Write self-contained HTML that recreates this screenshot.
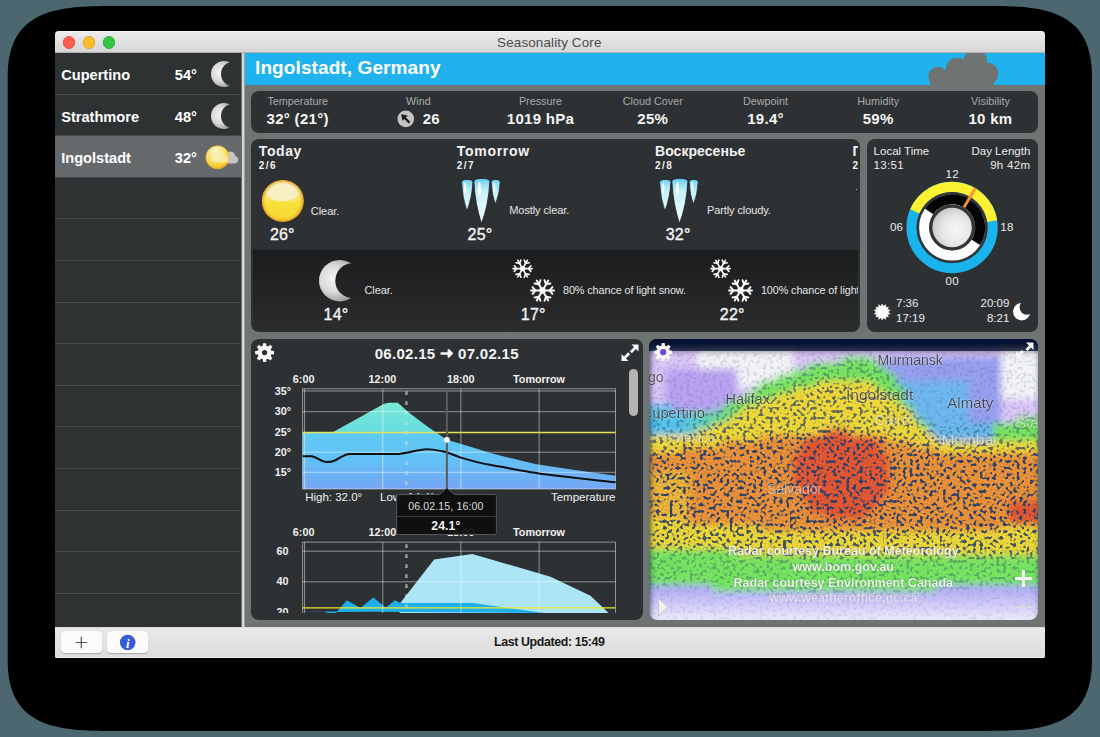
<!DOCTYPE html>
<html><head><meta charset="utf-8">
<style>
*{margin:0;padding:0;box-sizing:border-box}
html,body{width:1100px;height:737px;overflow:hidden;background:#4c676f;font-family:"Liberation Sans",sans-serif;position:relative}
.a{position:absolute}
.t{position:absolute;white-space:nowrap;line-height:1}
svg{position:absolute;overflow:visible}
</style></head><body>
<svg style="left:0;top:0" width="1100" height="737" viewBox="0 0 1100 737"><path d="M7.7 75.9 C7.7 5.9 63.7 5.9 117.7 5.9 L981.9000000000001 5.9 C1035.9 5.9 1091.9 5.9 1091.9 75.9 L1091.9 660.9 C1091.9 730.9 1035.9 730.9 981.9000000000001 730.9 L117.7 730.9 C63.7 730.9 7.7 730.9 7.7 660.9 Z" fill="#000"/></svg>
<div class="a" style="left:55px;top:31px;width:990px;height:627px;background:#6d7472;border-radius:4px 4px 1px 1px;overflow:hidden"></div>
<div class="a" style="left:55px;top:31px;width:990px;height:22px;background:linear-gradient(#fbfbfb 0,#ebebeb 1px,#d5d5d5 100%);border-radius:4px 4px 0 0;border-bottom:1px solid #b3b3b3"></div>
<div class="a" style="left:62.89999999999999px;top:36.199999999999996px;width:12.4px;height:12.4px;border-radius:50%;background:#fd5e4a;border:0.5px solid #e5503c"></div>
<div class="a" style="left:83.0px;top:36.199999999999996px;width:12.4px;height:12.4px;border-radius:50%;background:#fdbc2e;border:0.5px solid #dea123"></div>
<div class="a" style="left:102.89999999999999px;top:36.199999999999996px;width:12.4px;height:12.4px;border-radius:50%;background:#37c545;border:0.5px solid #2aae38"></div>
<div class="t" style="left:549.3px;top:35.96px;font-size:13.4px;font-weight:normal;color:#4b4b4b;transform:translateX(-50%);letter-spacing:0.15px;">Seasonality Core</div>
<div class="a" style="left:55px;top:53px;width:186px;height:574px;background:#2e3233"></div>
<div class="a" style="left:55px;top:93.6px;width:186px;height:1px;background:#46494b"></div>
<div class="a" style="left:55px;top:135.2px;width:186px;height:1px;background:#46494b"></div>
<div class="a" style="left:55px;top:136.2px;width:186px;height:41.599999999999994px;background:#65696b"></div>
<div class="a" style="left:55px;top:176.8px;width:186px;height:1px;background:#46494b"></div>
<div class="a" style="left:55px;top:218.4px;width:186px;height:1px;background:#46494b"></div>
<div class="a" style="left:55px;top:260.0px;width:186px;height:1px;background:#46494b"></div>
<div class="a" style="left:55px;top:301.6px;width:186px;height:1px;background:#46494b"></div>
<div class="a" style="left:55px;top:343.2px;width:186px;height:1px;background:#46494b"></div>
<div class="a" style="left:55px;top:384.8px;width:186px;height:1px;background:#46494b"></div>
<div class="a" style="left:55px;top:426.4px;width:186px;height:1px;background:#46494b"></div>
<div class="a" style="left:55px;top:468.0px;width:186px;height:1px;background:#46494b"></div>
<div class="a" style="left:55px;top:509.6px;width:186px;height:1px;background:#46494b"></div>
<div class="a" style="left:55px;top:551.2px;width:186px;height:1px;background:#46494b"></div>
<div class="a" style="left:55px;top:592.8px;width:186px;height:1px;background:#46494b"></div>
<div class="a" style="left:55px;top:634.4px;width:186px;height:1px;background:#46494b"></div>
<div class="t" style="left:61.2px;top:67.94px;font-size:14.6px;font-weight:bold;color:#fff;">Cupertino</div>
<div class="t" style="left:174.8px;top:67.94px;font-size:14.6px;font-weight:bold;color:#fff;">54°</div>
<div class="t" style="left:61.2px;top:109.54px;font-size:14.6px;font-weight:bold;color:#fff;">Strathmore</div>
<div class="t" style="left:174.8px;top:109.54px;font-size:14.6px;font-weight:bold;color:#fff;">48°</div>
<div class="t" style="left:61.2px;top:151.14px;font-size:14.6px;font-weight:bold;color:#fff;">Ingolstadt</div>
<div class="t" style="left:174.8px;top:151.14px;font-size:14.6px;font-weight:bold;color:#fff;">32°</div>
<svg style="left:209.4px;top:59.400000000000006px" width="30" height="30" viewBox="209.4 59.400000000000006 30 30">
<defs><radialGradient id="m1g" cx="220.5" cy="73.10000000000001" r="15.6" gradientUnits="userSpaceOnUse"><stop offset="0" stop-color="#f4f4f4"/><stop offset="0.55" stop-color="#d9d9d9"/><stop offset="1" stop-color="#9c9c9c"/></radialGradient>
<mask id="m1m"><rect x="209.4" y="59.400000000000006" width="30" height="30" fill="#fff"/><circle cx="233.6" cy="74.4" r="12.2" fill="#000"/></mask></defs>
<circle cx="224.4" cy="74.4" r="13" fill="url(#m1g)" mask="url(#m1m)"/></svg>
<svg style="left:209.4px;top:101.0px" width="30" height="30" viewBox="209.4 101.0 30 30">
<defs><radialGradient id="m2g" cx="220.5" cy="114.7" r="15.6" gradientUnits="userSpaceOnUse"><stop offset="0" stop-color="#f4f4f4"/><stop offset="0.55" stop-color="#d9d9d9"/><stop offset="1" stop-color="#9c9c9c"/></radialGradient>
<mask id="m2m"><rect x="209.4" y="101.0" width="30" height="30" fill="#fff"/><circle cx="233.6" cy="116.0" r="12.2" fill="#000"/></mask></defs>
<circle cx="224.4" cy="116.0" r="13" fill="url(#m2g)" mask="url(#m2m)"/></svg>
<svg style="left:200px;top:140px" width="45" height="35" viewBox="200 140 45 35">
<defs><radialGradient id="sg1" cx="215.5" cy="151" r="17" gradientUnits="userSpaceOnUse"><stop offset="0" stop-color="#fbf5d0"/><stop offset="0.45" stop-color="#f8e67a"/><stop offset="0.85" stop-color="#f5d23a"/><stop offset="1" stop-color="#f0b830"/></radialGradient></defs>
<path d="M225 163.4 h9.8 a3.6 3.6 0 0 0 0.6 -7.1 a5.2 5.2 0 0 0 -9.6 -2.2 a4 4 0 0 0 -0.8 9.3z" fill="#c6c6c6"/>
<circle cx="217.5" cy="157.3" r="11.6" fill="url(#sg1)" stroke="#eeac2c" stroke-width="0.7"/>
<path d="M214.5 162.6 h10.5 a3.3 3.3 0 0 0 0.3 -6.6 a4.8 4.8 0 0 0 -8.8 -1.6 a3.8 3.8 0 0 0 -2 8.2z" fill="#f8f0b8" opacity="0.75"/>
</svg>
<div class="a" style="left:241px;top:53px;width:4.300000000000011px;height:574px;background:#d8d8d8;border-left:1px solid #6a6d6e;border-right:0.6px solid #a0a0a0"></div>
<div class="a" style="left:245.2px;top:53px;width:799.8px;height:32px;background:#1fb2ec"></div>
<div class="t" style="left:255.0px;top:58.22px;font-size:19px;font-weight:bold;color:#fff;letter-spacing:0.1px;">Ingolstadt, Germany</div>
<svg style="left:920px;top:53px;overflow:hidden" width="125" height="32" viewBox="920 53 125 32">
<g fill="#6d7472"><circle cx="938" cy="76.6" r="9.8"/><circle cx="957" cy="68.9" r="11.2"/><circle cx="975.3" cy="60.6" r="11.6"/><circle cx="987.1" cy="73.6" r="11.2"/><rect x="936" y="70" width="52" height="15"/><rect x="930" y="78" width="10" height="7"/><rect x="985" y="78" width="9" height="7"/></g>
</svg>
<div class="a" style="left:251px;top:91px;width:787px;height:41.5px;background:#2e3133;border-radius:8px"></div>
<div class="a" style="left:251px;top:138.5px;width:609px;height:193.8px;background:#2e3133;border-radius:8px"></div>
<div class="a" style="left:866.5px;top:138.5px;width:171.5px;height:193.8px;background:#2e3133;border-radius:8px"></div>
<div class="a" style="left:251px;top:338.7px;width:392.20000000000005px;height:281.09999999999997px;background:#2e3133;border-radius:8px"></div>
<div class="t" style="left:297.7px;top:95.86px;font-size:10.8px;font-weight:normal;color:#a9abac;transform:translateX(-50%);">Temperature</div>
<div class="t" style="left:297.7px;top:111.30px;font-size:15px;font-weight:bold;color:#f4f4f4;transform:translateX(-50%);letter-spacing:0.3px;">32° (21°)</div>
<div class="t" style="left:418.4px;top:95.86px;font-size:10.8px;font-weight:normal;color:#a9abac;transform:translateX(-50%);">Wind</div>
<div class="t" style="left:540.5px;top:95.86px;font-size:10.8px;font-weight:normal;color:#a9abac;transform:translateX(-50%);">Pressure</div>
<div class="t" style="left:540.5px;top:111.30px;font-size:15px;font-weight:bold;color:#f4f4f4;transform:translateX(-50%);letter-spacing:0.3px;">1019 hPa</div>
<div class="t" style="left:652.8px;top:95.86px;font-size:10.8px;font-weight:normal;color:#a9abac;transform:translateX(-50%);">Cloud Cover</div>
<div class="t" style="left:652.8px;top:111.30px;font-size:15px;font-weight:bold;color:#f4f4f4;transform:translateX(-50%);letter-spacing:0.3px;">25%</div>
<div class="t" style="left:765.5px;top:95.86px;font-size:10.8px;font-weight:normal;color:#a9abac;transform:translateX(-50%);">Dewpoint</div>
<div class="t" style="left:765.5px;top:111.30px;font-size:15px;font-weight:bold;color:#f4f4f4;transform:translateX(-50%);letter-spacing:0.3px;">19.4°</div>
<div class="t" style="left:878.2px;top:95.86px;font-size:10.8px;font-weight:normal;color:#a9abac;transform:translateX(-50%);">Humidity</div>
<div class="t" style="left:878.2px;top:111.30px;font-size:15px;font-weight:bold;color:#f4f4f4;transform:translateX(-50%);letter-spacing:0.3px;">59%</div>
<div class="t" style="left:990.5px;top:95.86px;font-size:10.8px;font-weight:normal;color:#a9abac;transform:translateX(-50%);">Visibility</div>
<div class="t" style="left:990.5px;top:111.30px;font-size:15px;font-weight:bold;color:#f4f4f4;transform:translateX(-50%);letter-spacing:0.3px;">10 km</div>
<div class="t" style="left:431.3px;top:111.30px;font-size:15px;font-weight:bold;color:#f4f4f4;transform:translateX(-50%);letter-spacing:0.3px;">26</div>
<svg style="left:396px;top:110px" width="20" height="20" viewBox="396 110 20 20">
<circle cx="405.8" cy="118.9" r="8.3" fill="#c4c4c4"/>
<path d="M401.2 114.3 L407.8 115.6 L405.9 117.4 L410.3 121.8 L408.7 123.4 L404.3 119 L402.5 120.9 Z" fill="#1c1c1c"/>
</svg>
<div class="a" style="left:55px;top:627px;width:990px;height:31px;background:linear-gradient(#e9e9e9,#dcdcdc);border-top:1px solid #d9d9d9;border-bottom:1px solid #f2f2f2;border-radius:0 0 2px 2px"></div>
<div class="a" style="left:60.5px;top:631.3px;width:41.2px;height:21.800000000000068px;background:#fbfbfb;border-radius:4px;box-shadow:0 0.5px 1px rgba(0,0,0,0.25)"></div>
<div class="a" style="left:107.3px;top:631.3px;width:41.2px;height:21.800000000000068px;background:#fbfbfb;border-radius:4px;box-shadow:0 0.5px 1px rgba(0,0,0,0.25)"></div>
<svg style="left:60px;top:631px" width="90" height="23" viewBox="60 631 90 23">
<path d="M81.3 636.7 V648.3 M75.5 642.5 H87.1" stroke="#555" stroke-width="1.2"/>
<circle cx="127.7" cy="642.5" r="7.8" fill="#3a5bd6"/>
</svg>
<div class="t" style="left:127.7px;top:636.50px;font-size:13px;font-weight:bold;color:#fff;transform:translateX(-50%);font-family:Liberation Serif;font-style:italic">i</div>
<div class="t" style="left:549.3px;top:635.90px;font-size:12.4px;font-weight:bold;color:#1a1a1a;transform:translateX(-50%);letter-spacing:-0.38px;">Last Updated: 15:49</div>
<div class="a" style="left:253.4px;top:250.2px;width:604.4px;height:81.0px;background:linear-gradient(#1b1c1d,#2a2c2e);border-radius:0 0 8px 6px"></div>
<div class="t" style="left:258.8px;top:144.35px;font-size:14px;font-weight:bold;color:#f2f2f2;letter-spacing:0.6px;">Today</div>
<div class="t" style="left:258.8px;top:161.34px;font-size:10px;font-weight:bold;color:#f0f0f0;letter-spacing:1.4px;">2/6</div>
<div class="t" style="left:456.8px;top:144.35px;font-size:14px;font-weight:bold;color:#f2f2f2;letter-spacing:0.7px;">Tomorrow</div>
<div class="t" style="left:456.8px;top:161.34px;font-size:10px;font-weight:bold;color:#f0f0f0;letter-spacing:1.4px;">2/7</div>
<div class="t" style="left:655px;top:144.35px;font-size:14px;font-weight:bold;color:#f2f2f2;letter-spacing:0.05px;">Воскресенье</div>
<div class="t" style="left:655px;top:161.34px;font-size:10px;font-weight:bold;color:#f0f0f0;letter-spacing:1.4px;">2/8</div>
<div class="a" style="left:852.5px;top:146px;width:5.3px;height:28px;overflow:hidden">
<div class="t" style="left:0.1px;top:-1.65px;font-size:14px;font-weight:bold;color:#f2f2f2;">П</div>
</div>
<div class="t" style="left:852.6px;top:161.34px;font-size:10px;font-weight:bold;color:#f0f0f0;">2</div>
<div class="a" style="left:855.8px;top:188.5px;width:1.7000000000000455px;height:1.6999999999999886px;background:#6ccdf0"></div>
<svg style="left:258px;top:176px" width="50" height="50" viewBox="258 176 50 50">
<defs><linearGradient id="sunb" x1="0" y1="180" x2="0" y2="222" gradientUnits="userSpaceOnUse"><stop offset="0" stop-color="#f6e890"/><stop offset="0.45" stop-color="#f7e56a"/><stop offset="0.55" stop-color="#f8e03a"/><stop offset="1" stop-color="#f6d82e"/></linearGradient>
<radialGradient id="sune" cx="282.7" cy="201" r="21" gradientUnits="userSpaceOnUse"><stop offset="0.8" stop-color="#f0a020" stop-opacity="0"/><stop offset="1" stop-color="#e89a20" stop-opacity="0.75"/></radialGradient></defs>
<circle cx="282.8" cy="200.9" r="20.4" fill="url(#sunb)"/>
<ellipse cx="282.7" cy="191.5" rx="16.3" ry="9.8" fill="#f8f2d2" opacity="0.85"/>
<circle cx="282.8" cy="200.9" r="20.4" fill="url(#sune)" stroke="#eeae2c" stroke-width="1.1"/>
</svg>
<div class="t" style="left:310.8px;top:205.89px;font-size:11px;font-weight:normal;color:#e6e6e6;letter-spacing:-0.05px;">Clear.</div>
<div class="t" style="left:282.3px;top:227.06px;font-size:16px;font-weight:normal;color:#f4f4f4;transform:translateX(-50%);letter-spacing:0.2px;-webkit-text-stroke:0.35px #f4f4f4">26°</div>
<svg style="left:455px;top:172px" width="55" height="55" viewBox="455 172 55 55">
<defs><linearGradient id="ic0" x1="0" y1="178" x2="0" y2="223" gradientUnits="userSpaceOnUse"><stop offset="0" stop-color="#52c4ec"/><stop offset="0.1" stop-color="#8ad9f4"/><stop offset="0.3" stop-color="#c6f0fa"/><stop offset="1" stop-color="#f2fdff"/></linearGradient></defs>
<g transform="translate(0,0)" fill="url(#ic0)" stroke="#16191a" stroke-width="0.7">
<path d="M461.6 182.3 Q461.6 179.4 467.3 179.4 Q472.9 179.4 472.9 182.3 Q472 198 466.9 211 Q462.4 198 461.6 182.3 Z"/>
<path d="M473.9 181.6 Q473.9 178.4 481.8 178.4 Q489.8 178.4 489.8 181.6 Q488.6 205 481.5 223.4 Q475.2 205 473.9 181.6 Z"/>
<path d="M491.2 182.3 Q491.2 179.4 495.7 179.4 Q500.2 179.4 500.2 182.3 Q499.5 195 495.3 204.4 Q491.9 195 491.2 182.3 Z"/>
</g>
<g transform="translate(0,0)" fill="#ffffff" opacity="0.85">
<ellipse cx="465.2" cy="188" rx="1.2" ry="6"/>
<ellipse cx="479.4" cy="189" rx="1.5" ry="7.5"/>
<ellipse cx="494.3" cy="187" rx="1" ry="5"/>
</g></svg>
<div class="t" style="left:509.3px;top:205.39px;font-size:11px;font-weight:normal;color:#e6e6e6;letter-spacing:-0.1px;">Mostly clear.</div>
<div class="t" style="left:480.0px;top:227.06px;font-size:16px;font-weight:normal;color:#f4f4f4;transform:translateX(-50%);letter-spacing:0.2px;-webkit-text-stroke:0.35px #f4f4f4">25°</div>
<svg style="left:653.2px;top:172px" width="55" height="55" viewBox="653.2 172 55 55">
<defs><linearGradient id="ic198" x1="0" y1="178" x2="0" y2="223" gradientUnits="userSpaceOnUse"><stop offset="0" stop-color="#52c4ec"/><stop offset="0.1" stop-color="#8ad9f4"/><stop offset="0.3" stop-color="#c6f0fa"/><stop offset="1" stop-color="#f2fdff"/></linearGradient></defs>
<g transform="translate(198.2,0)" fill="url(#ic198)" stroke="#16191a" stroke-width="0.7">
<path d="M461.6 182.3 Q461.6 179.4 467.3 179.4 Q472.9 179.4 472.9 182.3 Q472 198 466.9 211 Q462.4 198 461.6 182.3 Z"/>
<path d="M473.9 181.6 Q473.9 178.4 481.8 178.4 Q489.8 178.4 489.8 181.6 Q488.6 205 481.5 223.4 Q475.2 205 473.9 181.6 Z"/>
<path d="M491.2 182.3 Q491.2 179.4 495.7 179.4 Q500.2 179.4 500.2 182.3 Q499.5 195 495.3 204.4 Q491.9 195 491.2 182.3 Z"/>
</g>
<g transform="translate(198.2,0)" fill="#ffffff" opacity="0.85">
<ellipse cx="465.2" cy="188" rx="1.2" ry="6"/>
<ellipse cx="479.4" cy="189" rx="1.5" ry="7.5"/>
<ellipse cx="494.3" cy="187" rx="1" ry="5"/>
</g></svg>
<div class="t" style="left:707px;top:205.39px;font-size:11px;font-weight:normal;color:#e6e6e6;letter-spacing:-0.1px;">Partly cloudy.</div>
<div class="t" style="left:678.1px;top:227.06px;font-size:16px;font-weight:normal;color:#f4f4f4;transform:translateX(-50%);letter-spacing:0.2px;-webkit-text-stroke:0.35px #f4f4f4">32°</div>
<svg style="left:317.2px;top:257.6px" width="45.4" height="45.4" viewBox="317.2 257.6 45.4 45.4">
<defs><radialGradient id="m3g" cx="333.69" cy="278.23" r="24.84" gradientUnits="userSpaceOnUse"><stop offset="0" stop-color="#f4f4f4"/><stop offset="0.55" stop-color="#d9d9d9"/><stop offset="1" stop-color="#9c9c9c"/></radialGradient>
<mask id="m3m"><rect x="317.2" y="257.6" width="45.4" height="45.4" fill="#fff"/><circle cx="353" cy="280.3" r="17.5" fill="#000"/></mask></defs>
<circle cx="339.9" cy="280.3" r="20.7" fill="url(#m3g)" mask="url(#m3m)"/></svg>
<div class="t" style="left:364.5px;top:284.89px;font-size:11px;font-weight:normal;color:#e6e6e6;letter-spacing:-0.1px;">Clear.</div>
<div class="t" style="left:336px;top:306.66px;font-size:16px;font-weight:normal;color:#f4f4f4;transform:translateX(-50%);letter-spacing:0.2px;-webkit-text-stroke:0.35px #f4f4f4">14°</div>
<svg style="left:511.19999999999993px;top:257.0px" width="23.2" height="23.2" viewBox="511.19999999999993 257.0 23.2 23.2"><g stroke="#fafafa" stroke-width="1.63" stroke-linecap="round" fill="none"><path d="M522.8 268.6 L532.40 268.60"/><path d="M528.75 268.60 l2.34 2.79"/><path d="M528.75 268.60 l2.34 -2.79"/><path d="M522.8 268.6 L527.60 276.91"/><path d="M525.78 273.75 l-1.25 3.43"/><path d="M525.78 273.75 l3.59 0.63"/><path d="M522.8 268.6 L518.00 276.91"/><path d="M519.82 273.75 l-3.59 0.63"/><path d="M519.82 273.75 l1.25 3.43"/><path d="M522.8 268.6 L513.20 268.60"/><path d="M516.85 268.60 l-2.34 -2.79"/><path d="M516.85 268.60 l-2.34 2.79"/><path d="M522.8 268.6 L518.00 260.29"/><path d="M519.82 263.45 l1.25 -3.43"/><path d="M519.82 263.45 l-3.59 -0.63"/><path d="M522.8 268.6 L527.60 260.29"/><path d="M525.78 263.45 l3.59 -0.63"/><path d="M525.78 263.45 l-1.25 -3.43"/><circle cx="522.8" cy="268.6" r="2.69" fill="#fafafa" stroke="none"/></g></svg>
<svg style="left:529.2px;top:276.5px" width="27.0" height="27.0" viewBox="529.2 276.5 27.0 27.0"><g stroke="#fafafa" stroke-width="1.96" stroke-linecap="round" fill="none"><path d="M542.7 290 L554.20 290.00"/><path d="M549.83 290.00 l2.81 3.35"/><path d="M549.83 290.00 l2.81 -3.35"/><path d="M542.7 290 L548.45 299.96"/><path d="M546.27 296.17 l-1.49 4.11"/><path d="M546.27 296.17 l4.30 0.76"/><path d="M542.7 290 L536.95 299.96"/><path d="M539.13 296.17 l-4.30 0.76"/><path d="M539.13 296.17 l1.49 4.11"/><path d="M542.7 290 L531.20 290.00"/><path d="M535.57 290.00 l-2.81 -3.35"/><path d="M535.57 290.00 l-2.81 3.35"/><path d="M542.7 290 L536.95 280.04"/><path d="M539.13 283.83 l1.49 -4.11"/><path d="M539.13 283.83 l-4.30 -0.76"/><path d="M542.7 290 L548.45 280.04"/><path d="M546.27 283.83 l4.30 -0.76"/><path d="M546.27 283.83 l-1.49 -4.11"/><circle cx="542.7" cy="290" r="3.22" fill="#fafafa" stroke="none"/></g></svg>
<div class="t" style="left:563px;top:285.36px;font-size:10.8px;font-weight:normal;color:#e6e6e6;letter-spacing:-0.08px;">80% chance of light snow.</div>
<div class="t" style="left:533.2px;top:306.66px;font-size:16px;font-weight:normal;color:#f4f4f4;transform:translateX(-50%);letter-spacing:0.2px;-webkit-text-stroke:0.35px #f4f4f4">17°</div>
<svg style="left:709.1999999999999px;top:257.0px" width="23.2" height="23.2" viewBox="709.1999999999999 257.0 23.2 23.2"><g stroke="#fafafa" stroke-width="1.63" stroke-linecap="round" fill="none"><path d="M720.8 268.6 L730.40 268.60"/><path d="M726.75 268.60 l2.34 2.79"/><path d="M726.75 268.60 l2.34 -2.79"/><path d="M720.8 268.6 L725.60 276.91"/><path d="M723.78 273.75 l-1.25 3.43"/><path d="M723.78 273.75 l3.59 0.63"/><path d="M720.8 268.6 L716.00 276.91"/><path d="M717.82 273.75 l-3.59 0.63"/><path d="M717.82 273.75 l1.25 3.43"/><path d="M720.8 268.6 L711.20 268.60"/><path d="M714.85 268.60 l-2.34 -2.79"/><path d="M714.85 268.60 l-2.34 2.79"/><path d="M720.8 268.6 L716.00 260.29"/><path d="M717.82 263.45 l1.25 -3.43"/><path d="M717.82 263.45 l-3.59 -0.63"/><path d="M720.8 268.6 L725.60 260.29"/><path d="M723.78 263.45 l3.59 -0.63"/><path d="M723.78 263.45 l-1.25 -3.43"/><circle cx="720.8" cy="268.6" r="2.69" fill="#fafafa" stroke="none"/></g></svg>
<svg style="left:727.2px;top:276.5px" width="27.0" height="27.0" viewBox="727.2 276.5 27.0 27.0"><g stroke="#fafafa" stroke-width="1.96" stroke-linecap="round" fill="none"><path d="M740.7 290 L752.20 290.00"/><path d="M747.83 290.00 l2.81 3.35"/><path d="M747.83 290.00 l2.81 -3.35"/><path d="M740.7 290 L746.45 299.96"/><path d="M744.27 296.17 l-1.49 4.11"/><path d="M744.27 296.17 l4.30 0.76"/><path d="M740.7 290 L734.95 299.96"/><path d="M737.13 296.17 l-4.30 0.76"/><path d="M737.13 296.17 l1.49 4.11"/><path d="M740.7 290 L729.20 290.00"/><path d="M733.57 290.00 l-2.81 -3.35"/><path d="M733.57 290.00 l-2.81 3.35"/><path d="M740.7 290 L734.95 280.04"/><path d="M737.13 283.83 l1.49 -4.11"/><path d="M737.13 283.83 l-4.30 -0.76"/><path d="M740.7 290 L746.45 280.04"/><path d="M744.27 283.83 l4.30 -0.76"/><path d="M744.27 283.83 l-1.49 -4.11"/><circle cx="740.7" cy="290" r="3.22" fill="#fafafa" stroke="none"/></g></svg>
<div class="a" style="left:760px;top:280px;width:97.8px;height:20px;overflow:hidden">
<div class="t" style="left:0.9px;top:5.36px;font-size:10.8px;font-weight:normal;color:#e6e6e6;letter-spacing:-0.08px;">100% chance of light snow.</div>
</div>
<div class="t" style="left:732.2px;top:306.66px;font-size:16px;font-weight:normal;color:#f4f4f4;transform:translateX(-50%);letter-spacing:0.2px;-webkit-text-stroke:0.35px #f4f4f4">22°</div>
<div class="t" style="left:873.6px;top:145.87px;font-size:11.5px;font-weight:normal;color:#ececec;">Local Time</div>
<div class="t" style="left:873.6px;top:160.27px;font-size:11.5px;font-weight:normal;color:#ececec;letter-spacing:0.3px;">13:51</div>
<div class="t" style="left:1030.3px;top:145.87px;font-size:11.5px;font-weight:normal;color:#ececec;transform:translateX(-100%);">Day Length</div>
<div class="t" style="left:1030.3px;top:160.27px;font-size:11.5px;font-weight:normal;color:#ececec;transform:translateX(-100%);letter-spacing:0.3px;">9h 42m</div>
<div class="t" style="left:952.2px;top:169.27px;font-size:11.5px;font-weight:normal;color:#ececec;transform:translateX(-50%);letter-spacing:0.3px;">12</div>
<div class="t" style="left:896.6px;top:222.47px;font-size:11.5px;font-weight:normal;color:#ececec;transform:translateX(-50%);letter-spacing:0.3px;">06</div>
<div class="t" style="left:1007px;top:222.47px;font-size:11.5px;font-weight:normal;color:#ececec;transform:translateX(-50%);letter-spacing:0.3px;">18</div>
<div class="t" style="left:952.2px;top:275.97px;font-size:11.5px;font-weight:normal;color:#ececec;transform:translateX(-50%);letter-spacing:0.3px;">00</div>
<div class="t" style="left:896px;top:298.47px;font-size:11.5px;font-weight:normal;color:#ececec;">7:36</div>
<div class="t" style="left:896px;top:313.07px;font-size:11.5px;font-weight:normal;color:#ececec;">17:19</div>
<div class="t" style="left:1009.3px;top:298.47px;font-size:11.5px;font-weight:normal;color:#ececec;transform:translateX(-100%);">20:09</div>
<div class="t" style="left:1009.3px;top:313.07px;font-size:11.5px;font-weight:normal;color:#ececec;transform:translateX(-100%);">8:21</div>
<svg style="left:900px;top:175px" width="105" height="105" viewBox="900 175 105 105"><circle cx="952.1" cy="227.55" r="40.6" fill="none" stroke="#19b3ee" stroke-width="10.2"/><path d="M914.87 211.36 A40.6 40.6 0 0 1 992.19 221.13" fill="none" stroke="#fcf232" stroke-width="10.2"/><circle cx="952.1" cy="227.55" r="35.5" fill="#333537"/><circle cx="952.1" cy="227.55" r="28" fill="none" stroke="#fdfdfd" stroke-width="10"/><path d="M929.16 211.49 A28 28 0 0 1 975.85 242.39" fill="none" stroke="#040404" stroke-width="10"/><defs><radialGradient id="cg" cx="956.1" cy="230.55" r="24" gradientUnits="userSpaceOnUse"><stop offset="0" stop-color="#f7f7f7"/><stop offset="0.6" stop-color="#e6e6e6"/><stop offset="1" stop-color="#c9c9c9"/></radialGradient></defs><circle cx="952.1" cy="227.55" r="21.2" fill="url(#cg)" stroke="#333537" stroke-width="3"/><path d="M964.03 207.30 L975.45 187.92" stroke="#f7913a" stroke-width="2.8"/></svg>
<svg style="left:875px;top:300px" width="22" height="22" viewBox="875 300 22 22"><polygon points="882.20,303.40 883.58,305.96 885.93,304.25 886.07,307.15 888.92,306.64 887.79,309.31 890.58,310.09 888.40,312.00 890.58,313.91 887.79,314.69 888.92,317.36 886.07,316.85 885.93,319.75 883.58,318.04 882.20,320.60 880.82,318.04 878.47,319.75 878.33,316.85 875.48,317.36 876.61,314.69 873.82,313.91 876.00,312.00 873.82,310.09 876.61,309.31 875.48,306.64 878.33,307.15 878.47,304.25 880.82,305.96" fill="#fff"/></svg>
<svg style="left:1011.0999999999999px;top:301.1px" width="21.4" height="21.4" viewBox="1011.0999999999999 301.1 21.4 21.4">
<defs><radialGradient id="m4g" cx="1019.1899999999999" cy="310.93" r="10.44" gradientUnits="userSpaceOnUse"><stop offset="0" stop-color="#f4f4f4"/><stop offset="0.55" stop-color="#d9d9d9"/><stop offset="1" stop-color="#9c9c9c"/></radialGradient>
<mask id="m4m"><rect x="1011.0999999999999" y="301.1" width="21.4" height="21.4" fill="#fff"/><circle cx="1027.0" cy="307.6" r="7.3" fill="#000"/></mask></defs>
<circle cx="1021.8" cy="311.8" r="8.7" fill="#fff" mask="url(#m4m)"/></svg>
<svg style="left:253.79999999999998px;top:342.0px" width="21.2" height="21.2" viewBox="253.79999999999998 342.0 21.2 21.2"><path fill="#f8f8f8" fill-rule="evenodd" d="M262.53 345.85 L262.85 343.13 L265.95 343.13 L266.27 345.85 L267.85 346.51 L270.00 344.81 L272.19 347.00 L270.49 349.15 L271.15 350.73 L273.87 351.05 L273.87 354.15 L271.15 354.47 L270.49 356.05 L272.19 358.20 L270.00 360.39 L267.85 358.69 L266.27 359.35 L265.95 362.07 L262.85 362.07 L262.53 359.35 L260.95 358.69 L258.80 360.39 L256.61 358.20 L258.31 356.05 L257.65 354.47 L254.93 354.15 L254.93 351.05 L257.65 350.73 L258.31 349.15 L256.61 347.00 L258.80 344.81 L260.95 346.51Z M267.0 352.6 A2.6 2.6 0 1 0 261.79999999999995 352.6 A2.6 2.6 0 1 0 267.0 352.6Z"/></svg>
<div class="t" style="left:374.7px;top:346.05px;font-size:15px;font-weight:bold;color:#f4f4f4;letter-spacing:0.3px;">06.02.15</div>
<div class="t" style="left:458px;top:346.05px;font-size:15px;font-weight:bold;color:#f4f4f4;letter-spacing:0.3px;">07.02.15</div>
<svg style="left:438px;top:346px" width="18" height="16" viewBox="438 346 18 16"><path d="M441.6 353.4 H449" stroke="#f6f6f6" stroke-width="2.5" stroke-linecap="round"/><path d="M448.6 350 L452.1 353.4 L448.6 356.8 Z" fill="#f6f6f6" stroke="#f6f6f6" stroke-width="2" stroke-linejoin="round"/></svg>
<svg style="left:619px;top:342px" width="22" height="22" viewBox="619 342 22 22">
<g fill="#f8f8f8"><path d="M631.5 344.5 H638.5 V351.5 L636 349 L631.8 353.2 L629.8 351.2 L634 347 Z"/>
<path d="M628.5 361 H621.5 V354 L624 356.5 L628.2 352.3 L630.2 354.3 L626 358.5 Z"/></g></svg>
<div class="a" style="left:628.8px;top:368.5px;width:9.100000000000023px;height:47.19999999999999px;background:#b4b4b4;border-radius:4.5px"></div>
<svg style="left:251px;top:338.7px" width="392" height="282" viewBox="251 338.7 392 282"><defs>
<clipPath id="gc"><rect x="251" y="362" width="374" height="250.7"/></clipPath>
<linearGradient id="tg" x1="0" y1="402" x2="0" y2="489" gradientUnits="userSpaceOnUse">
<stop offset="0" stop-color="#7ae8d6"/><stop offset="0.34" stop-color="#66dde0"/><stop offset="0.345" stop-color="#5ecbf2"/><stop offset="0.65" stop-color="#62c1f6"/><stop offset="1" stop-color="#76a5f5"/></linearGradient>
</defs><g clip-path="url(#gc)"><path d="M302.6 432.2 L333.2 431.8 L382.3 404.5 Q386 402.4 389.5 402.4 L397.7 402.4 L409.5 412.7 L427.7 426.4 L446.9 439.5 L474.5 447.7 C490 453 510 458 536.4 464 L580 470.5 L615.5 475.5 L615.5 488.7 L302.6 488.7 Z" fill="url(#tg)"/><path d="M302.6 390.7 H615.5" stroke="#ffffff" stroke-opacity="0.48" stroke-width="1" fill="none"/><path d="M302.6 411.4 H615.5" stroke="#ffffff" stroke-opacity="0.48" stroke-width="1" fill="none"/><path d="M302.6 451.9 H615.5" stroke="#ffffff" stroke-opacity="0.48" stroke-width="1" fill="none"/><path d="M302.6 472.0 H615.5" stroke="#ffffff" stroke-opacity="0.48" stroke-width="1" fill="none"/><path d="M304.6 388.5 V488.7" stroke="#ffffff" stroke-opacity="0.48" stroke-width="1" fill="none"/><path d="M382.8 388.5 V488.7" stroke="#ffffff" stroke-opacity="0.48" stroke-width="1" fill="none"/><path d="M460.9 388.5 V488.7" stroke="#ffffff" stroke-opacity="0.48" stroke-width="1" fill="none"/><path d="M539.1 388.5 V488.7" stroke="#ffffff" stroke-opacity="0.48" stroke-width="1" fill="none"/><rect x="302.6" y="388.5" width="312.9" height="100.2" stroke="#ffffff" stroke-opacity="0.48" stroke-width="1" fill="none"/><path d="M302.6 432.2 H615.5" stroke="#e8e25a" stroke-width="1.3"/><path d="M406.4 391 V488" stroke="#d8dadb" stroke-width="2.6" stroke-dasharray="3.6 6.4" opacity="0.6"/><path d="M302.6 456 L311.8 456 C318 457 320 461.5 326.4 461.8 C331 462 333 461 335.5 460 C341 457 344 453.8 350 453.6 L399 453.6 C408 453.2 416 449.5 424.5 449.1 C432 448.8 437 450 442.7 451 C448 452 454 455 461 457.3 C470 460 480 463 490 464.5 C510 468 530 472 545 474 C570 477 595 480 615.5 482" stroke="#111" stroke-width="2" fill="none"/><path d="M446.9 388.5 V492" stroke="#5b5d5e" stroke-width="2"/><circle cx="446.9" cy="439.5" r="2.9" fill="#fff"/><path d="M399.5 603.6 L434.1 559.1 L472.3 553.6 L550.5 576.4 L590.5 595.5 L608.6 612.7 L399.5 612.7 Z" fill="#ace5f5"/><path d="M302.6 610.9 L322.3 610.9 L327.7 612.7 L335.9 612.7 L346.8 600 L360.5 607.6 L373.2 597.3 L385.9 607.3 L395 600 L400.5 602.7 L472.3 602.7 L545 612.7 Z" fill="#1fb0ec"/><path d="M302.6 550.9 H615.5" stroke="#ffffff" stroke-opacity="0.48" stroke-width="1" fill="none"/><path d="M302.6 581.5 H615.5" stroke="#ffffff" stroke-opacity="0.48" stroke-width="1" fill="none"/><path d="M304.6 541.8 V613" stroke="#ffffff" stroke-opacity="0.48" stroke-width="1" fill="none"/><path d="M382.8 541.8 V613" stroke="#ffffff" stroke-opacity="0.48" stroke-width="1" fill="none"/><path d="M460.9 541.8 V613" stroke="#ffffff" stroke-opacity="0.48" stroke-width="1" fill="none"/><path d="M539.1 541.8 V613" stroke="#ffffff" stroke-opacity="0.48" stroke-width="1" fill="none"/><path d="M302.6 613 V541.8 H615.5 V613" stroke="#ffffff" stroke-opacity="0.48" stroke-width="1" fill="none"/><path d="M302.6 607.6 H615.5" stroke="#f2ea2a" stroke-width="1.4"/><path d="M406.4 544 V612" stroke="#d8dadb" stroke-width="2.6" stroke-dasharray="3.6 6.4" opacity="0.6"/></g></svg>
<div class="t" style="left:292.8px;top:373.96px;font-size:10.8px;font-weight:bold;color:#f0f0f0;">6:00</div>
<div class="t" style="left:368.6px;top:373.96px;font-size:10.8px;font-weight:bold;color:#f0f0f0;">12:00</div>
<div class="t" style="left:446.9px;top:373.96px;font-size:10.8px;font-weight:bold;color:#f0f0f0;">18:00</div>
<div class="t" style="left:513px;top:373.96px;font-size:10.8px;font-weight:bold;color:#f0f0f0;">Tomorrow</div>
<div class="t" style="left:291px;top:386.26px;font-size:10.8px;font-weight:bold;color:#f0f0f0;transform:translateX(-100%);">35°</div>
<div class="t" style="left:291px;top:406.46px;font-size:10.8px;font-weight:bold;color:#f0f0f0;transform:translateX(-100%);">30°</div>
<div class="t" style="left:291px;top:426.86px;font-size:10.8px;font-weight:bold;color:#f0f0f0;transform:translateX(-100%);">25°</div>
<div class="t" style="left:291px;top:447.06px;font-size:10.8px;font-weight:bold;color:#f0f0f0;transform:translateX(-100%);">20°</div>
<div class="t" style="left:291px;top:467.26px;font-size:10.8px;font-weight:bold;color:#f0f0f0;transform:translateX(-100%);">15°</div>
<div class="t" style="left:305.2px;top:492.07px;font-size:11.5px;font-weight:normal;color:#f0f0f0;">High: 32.0°</div>
<div class="t" style="left:380px;top:492.07px;font-size:11.5px;font-weight:normal;color:#f0f0f0;">Low: 14.4°</div>
<div class="t" style="left:615.5px;top:492.07px;font-size:11.5px;font-weight:normal;color:#f0f0f0;transform:translateX(-100%);">Temperature</div>
<div class="t" style="left:292.8px;top:527.26px;font-size:10.8px;font-weight:bold;color:#f0f0f0;">6:00</div>
<div class="t" style="left:368.6px;top:527.26px;font-size:10.8px;font-weight:bold;color:#f0f0f0;">12:00</div>
<div class="t" style="left:446.9px;top:527.26px;font-size:10.8px;font-weight:bold;color:#f0f0f0;">18:00</div>
<div class="t" style="left:513px;top:527.26px;font-size:10.8px;font-weight:bold;color:#f0f0f0;">Tomorrow</div>
<div class="a" style="left:270px;top:540px;width:25px;height:72.8px;overflow:hidden">
<div class="t" style="left:18.6px;top:5.66px;font-size:10.8px;font-weight:bold;color:#f0f0f0;transform:translateX(-100%);">60</div>
</div>
<div class="a" style="left:270px;top:540px;width:25px;height:72.8px;overflow:hidden">
<div class="t" style="left:18.6px;top:36.36px;font-size:10.8px;font-weight:bold;color:#f0f0f0;transform:translateX(-100%);">40</div>
</div>
<div class="a" style="left:270px;top:540px;width:25px;height:72.8px;overflow:hidden">
<div class="t" style="left:18.6px;top:67.06px;font-size:10.8px;font-weight:bold;color:#f0f0f0;transform:translateX(-100%);">20</div>
</div>
<svg style="left:390px;top:486px" width="115" height="55" viewBox="390 486 115 55">
<path d="M398.4 494.5 H439.5 L446.9 488 L454.3 494.5 H494.6 Q496.4 494.5 496.4 496.3 V532.7 Q496.4 534.5 494.6 534.5 H398.4 Q396.6 534.5 396.6 532.7 V496.3 Q396.6 494.5 398.4 494.5 Z" fill="#0d0d0d" fill-opacity="0.93" stroke="#555758" stroke-width="1"/>
<path d="M397 516.4 H496" stroke="#3a3c3d" stroke-width="1"/>
</svg>
<div class="t" style="left:445.9px;top:501.03px;font-size:10.6px;font-weight:normal;color:#dedede;transform:translateX(-50%);letter-spacing:0.1px;">06.02.15, 16:00</div>
<div class="t" style="left:445.9px;top:519.67px;font-size:12.2px;font-weight:bold;color:#f4f4f4;transform:translateX(-50%);letter-spacing:0.1px;">24.1°</div>
<div class="a" style="left:649px;top:338.7px;width:389px;height:281.8px;border-radius:8px;overflow:hidden;background:#07143a"><svg style="left:0;top:0" width="389" height="282" viewBox="649 338.7 389 282"><defs><filter id="mb" x="-10%" y="-10%" width="120%" height="120%"><feGaussianBlur stdDeviation="3.5"/></filter><pattern id="d1" x="0" y="0" width="3.4" height="3.4" patternUnits="userSpaceOnUse" patternTransform="rotate(17)"><path d="M0 0H3.4V3.4H0Z M1.7 0.35A1.35 1.35 0 1 0 1.7 3.05A1.35 1.35 0 1 0 1.7 0.35Z" fill="#0b1838" fill-rule="evenodd"/></pattern><pattern id="d2" x="1" y="0.5" width="4.3" height="4.3" patternUnits="userSpaceOnUse" patternTransform="rotate(-31)"><path d="M0 0H4.3V4.3H0Z M2.15 0.45A1.7 1.7 0 1 0 2.15 3.85A1.7 1.7 0 1 0 2.15 0.45Z" fill="#0b1838" fill-rule="evenodd"/></pattern><mask id="dmask"><g filter="url(#mb)"><rect x="649" y="338.7" width="392" height="6" fill="#000000"/><rect x="649" y="344.7" width="392" height="6" fill="#000000"/><rect x="649" y="350.7" width="392" height="6" fill="#202020"/><rect x="649" y="356.7" width="192" height="6" fill="#202020"/><rect x="841" y="356.7" width="32" height="6" fill="#666666"/><rect x="873" y="356.7" width="168" height="6" fill="#202020"/><rect x="649" y="362.7" width="160" height="6" fill="#202020"/><rect x="809" y="362.7" width="72" height="6" fill="#666666"/><rect x="881" y="362.7" width="160" height="6" fill="#202020"/><rect x="649" y="368.7" width="144" height="6" fill="#202020"/><rect x="793" y="368.7" width="96" height="6" fill="#666666"/><rect x="889" y="368.7" width="152" height="6" fill="#202020"/><rect x="649" y="374.7" width="128" height="6" fill="#202020"/><rect x="777" y="374.7" width="120" height="6" fill="#666666"/><rect x="897" y="374.7" width="144" height="6" fill="#202020"/><rect x="649" y="380.7" width="112" height="6" fill="#202020"/><rect x="761" y="380.7" width="56" height="6" fill="#666666"/><rect x="817" y="380.7" width="56" height="6" fill="#b7b7b7"/><rect x="873" y="380.7" width="24" height="6" fill="#666666"/><rect x="897" y="380.7" width="144" height="6" fill="#202020"/><rect x="649" y="386.7" width="104" height="6" fill="#202020"/><rect x="753" y="386.7" width="40" height="6" fill="#666666"/><rect x="793" y="386.7" width="88" height="6" fill="#b7b7b7"/><rect x="881" y="386.7" width="24" height="6" fill="#666666"/><rect x="905" y="386.7" width="136" height="6" fill="#202020"/><rect x="649" y="392.7" width="96" height="6" fill="#202020"/><rect x="745" y="392.7" width="32" height="6" fill="#666666"/><rect x="777" y="392.7" width="112" height="6" fill="#b7b7b7"/><rect x="889" y="392.7" width="16" height="6" fill="#666666"/><rect x="905" y="392.7" width="136" height="6" fill="#202020"/><rect x="649" y="398.7" width="80" height="6" fill="#202020"/><rect x="729" y="398.7" width="32" height="6" fill="#666666"/><rect x="761" y="398.7" width="136" height="6" fill="#b7b7b7"/><rect x="897" y="398.7" width="8" height="6" fill="#666666"/><rect x="905" y="398.7" width="136" height="6" fill="#202020"/><rect x="649" y="404.7" width="24" height="6" fill="#666666"/><rect x="673" y="404.7" width="48" height="6" fill="#202020"/><rect x="721" y="404.7" width="24" height="6" fill="#666666"/><rect x="745" y="404.7" width="160" height="6" fill="#b7b7b7"/><rect x="905" y="404.7" width="8" height="6" fill="#666666"/><rect x="913" y="404.7" width="128" height="6" fill="#202020"/><rect x="649" y="410.7" width="88" height="6" fill="#666666"/><rect x="737" y="410.7" width="176" height="6" fill="#b7b7b7"/><rect x="913" y="410.7" width="128" height="6" fill="#202020"/><rect x="649" y="416.7" width="80" height="6" fill="#666666"/><rect x="729" y="416.7" width="184" height="6" fill="#b7b7b7"/><rect x="913" y="416.7" width="8" height="6" fill="#666666"/><rect x="921" y="416.7" width="96" height="6" fill="#202020"/><rect x="1017" y="416.7" width="24" height="6" fill="#666666"/><rect x="649" y="422.7" width="64" height="6" fill="#666666"/><rect x="713" y="422.7" width="208" height="6" fill="#b7b7b7"/><rect x="921" y="422.7" width="120" height="6" fill="#666666"/><rect x="649" y="428.7" width="48" height="6" fill="#666666"/><rect x="697" y="428.7" width="128" height="6" fill="#b7b7b7"/><rect x="825" y="428.7" width="24" height="6" fill="#f4f4f4"/><rect x="849" y="428.7" width="80" height="6" fill="#b7b7b7"/><rect x="929" y="428.7" width="112" height="6" fill="#666666"/><rect x="649" y="434.7" width="112" height="6" fill="#b7b7b7"/><rect x="761" y="434.7" width="128" height="6" fill="#f4f4f4"/><rect x="889" y="434.7" width="48" height="6" fill="#b7b7b7"/><rect x="937" y="434.7" width="104" height="6" fill="#666666"/><rect x="649" y="440.7" width="72" height="6" fill="#b7b7b7"/><rect x="721" y="440.7" width="192" height="6" fill="#f4f4f4"/><rect x="913" y="440.7" width="128" height="6" fill="#b7b7b7"/><rect x="649" y="446.7" width="32" height="6" fill="#b7b7b7"/><rect x="681" y="446.7" width="256" height="6" fill="#f4f4f4"/><rect x="937" y="446.7" width="104" height="6" fill="#b7b7b7"/><rect x="649" y="452.7" width="392" height="6" fill="#f4f4f4"/><rect x="649" y="458.7" width="392" height="6" fill="#f4f4f4"/><rect x="649" y="464.7" width="392" height="6" fill="#f4f4f4"/><rect x="649" y="470.7" width="392" height="6" fill="#f4f4f4"/><rect x="649" y="476.7" width="392" height="6" fill="#f4f4f4"/><rect x="649" y="482.7" width="392" height="6" fill="#f4f4f4"/><rect x="649" y="488.7" width="392" height="6" fill="#f4f4f4"/><rect x="649" y="494.7" width="392" height="6" fill="#f4f4f4"/><rect x="649" y="500.7" width="392" height="6" fill="#f4f4f4"/><rect x="649" y="506.7" width="392" height="6" fill="#f4f4f4"/><rect x="649" y="512.7" width="392" height="6" fill="#f4f4f4"/><rect x="649" y="518.7" width="32" height="6" fill="#e0e0e0"/><rect x="681" y="518.7" width="360" height="6" fill="#f4f4f4"/><rect x="649" y="524.7" width="112" height="6" fill="#e0e0e0"/><rect x="761" y="524.7" width="240" height="6" fill="#f4f4f4"/><rect x="1001" y="524.7" width="40" height="6" fill="#e0e0e0"/><rect x="649" y="530.7" width="392" height="6" fill="#e0e0e0"/><rect x="649" y="536.7" width="392" height="6" fill="#e0e0e0"/><rect x="649" y="542.7" width="392" height="6" fill="#e0e0e0"/><rect x="649" y="548.7" width="88" height="6" fill="#595959"/><rect x="737" y="548.7" width="304" height="6" fill="#e0e0e0"/><rect x="649" y="554.7" width="392" height="6" fill="#595959"/><rect x="649" y="560.7" width="392" height="6" fill="#595959"/><rect x="649" y="566.7" width="392" height="6" fill="#595959"/><rect x="649" y="572.7" width="392" height="6" fill="#595959"/><rect x="649" y="578.7" width="392" height="6" fill="#595959"/><rect x="649" y="584.7" width="64" height="6" fill="#141414"/><rect x="713" y="584.7" width="224" height="6" fill="#595959"/><rect x="937" y="584.7" width="104" height="6" fill="#141414"/><rect x="649" y="590.7" width="392" height="6" fill="#141414"/><rect x="649" y="596.7" width="392" height="6" fill="#141414"/><rect x="649" y="602.7" width="392" height="6" fill="#141414"/><rect x="649" y="608.7" width="392" height="6" fill="#141414"/><rect x="649" y="614.7" width="392" height="6" fill="#141414"/><rect x="649" y="620.7" width="392" height="6" fill="#141414"/></g></mask></defs><g filter="url(#mb)"><rect x="649" y="338.7" width="392" height="6" fill="#07143a"/><rect x="649" y="344.7" width="392" height="6" fill="#07143a"/><rect x="649" y="350.7" width="48" height="6" fill="#dcc8f8"/><rect x="697" y="350.7" width="96" height="6" fill="#f4f4f8"/><rect x="793" y="350.7" width="208" height="6" fill="#dcc8f8"/><rect x="1001" y="350.7" width="40" height="6" fill="#f4f4f8"/><rect x="649" y="356.7" width="48" height="6" fill="#dcc8f8"/><rect x="697" y="356.7" width="96" height="6" fill="#f4f4f8"/><rect x="793" y="356.7" width="48" height="6" fill="#dcc8f8"/><rect x="841" y="356.7" width="32" height="6" fill="#78e860"/><rect x="873" y="356.7" width="8" height="6" fill="#dcc8f8"/><rect x="881" y="356.7" width="120" height="6" fill="#98a0f0"/><rect x="1001" y="356.7" width="40" height="6" fill="#f4f4f8"/><rect x="649" y="362.7" width="48" height="6" fill="#dcc8f8"/><rect x="697" y="362.7" width="96" height="6" fill="#f4f4f8"/><rect x="793" y="362.7" width="16" height="6" fill="#dcc8f8"/><rect x="809" y="362.7" width="72" height="6" fill="#78e860"/><rect x="881" y="362.7" width="120" height="6" fill="#98a0f0"/><rect x="1001" y="362.7" width="40" height="6" fill="#f4f4f8"/><rect x="649" y="368.7" width="16" height="6" fill="#dcc8f8"/><rect x="665" y="368.7" width="72" height="6" fill="#baa3f2"/><rect x="737" y="368.7" width="56" height="6" fill="#f4f4f8"/><rect x="793" y="368.7" width="96" height="6" fill="#78e860"/><rect x="889" y="368.7" width="112" height="6" fill="#98a0f0"/><rect x="1001" y="368.7" width="40" height="6" fill="#f4f4f8"/><rect x="649" y="374.7" width="16" height="6" fill="#dcc8f8"/><rect x="665" y="374.7" width="72" height="6" fill="#baa3f2"/><rect x="737" y="374.7" width="40" height="6" fill="#f4f4f8"/><rect x="777" y="374.7" width="120" height="6" fill="#78e860"/><rect x="897" y="374.7" width="104" height="6" fill="#98a0f0"/><rect x="1001" y="374.7" width="40" height="6" fill="#f4f4f8"/><rect x="649" y="380.7" width="16" height="6" fill="#dcc8f8"/><rect x="665" y="380.7" width="72" height="6" fill="#baa3f2"/><rect x="737" y="380.7" width="24" height="6" fill="#f4f4f8"/><rect x="761" y="380.7" width="56" height="6" fill="#78e860"/><rect x="817" y="380.7" width="56" height="6" fill="#f8e038"/><rect x="873" y="380.7" width="24" height="6" fill="#78e860"/><rect x="897" y="380.7" width="72" height="6" fill="#71b8f0"/><rect x="969" y="380.7" width="32" height="6" fill="#98a0f0"/><rect x="1001" y="380.7" width="40" height="6" fill="#f4f4f8"/><rect x="649" y="386.7" width="16" height="6" fill="#dcc8f8"/><rect x="665" y="386.7" width="72" height="6" fill="#baa3f2"/><rect x="737" y="386.7" width="16" height="6" fill="#dcc8f8"/><rect x="753" y="386.7" width="40" height="6" fill="#78e860"/><rect x="793" y="386.7" width="88" height="6" fill="#f8e038"/><rect x="881" y="386.7" width="24" height="6" fill="#78e860"/><rect x="905" y="386.7" width="64" height="6" fill="#71b8f0"/><rect x="969" y="386.7" width="32" height="6" fill="#98a0f0"/><rect x="1001" y="386.7" width="40" height="6" fill="#f4f4f8"/><rect x="649" y="392.7" width="16" height="6" fill="#dcc8f8"/><rect x="665" y="392.7" width="72" height="6" fill="#baa3f2"/><rect x="737" y="392.7" width="8" height="6" fill="#dcc8f8"/><rect x="745" y="392.7" width="32" height="6" fill="#78e860"/><rect x="777" y="392.7" width="112" height="6" fill="#f8e038"/><rect x="889" y="392.7" width="16" height="6" fill="#78e860"/><rect x="905" y="392.7" width="64" height="6" fill="#71b8f0"/><rect x="969" y="392.7" width="32" height="6" fill="#98a0f0"/><rect x="1001" y="392.7" width="40" height="6" fill="#f4f4f8"/><rect x="649" y="398.7" width="16" height="6" fill="#dcc8f8"/><rect x="665" y="398.7" width="64" height="6" fill="#baa3f2"/><rect x="729" y="398.7" width="8" height="6" fill="#74e470"/><rect x="737" y="398.7" width="24" height="6" fill="#78e860"/><rect x="761" y="398.7" width="136" height="6" fill="#f8e038"/><rect x="897" y="398.7" width="8" height="6" fill="#78e860"/><rect x="905" y="398.7" width="64" height="6" fill="#71b8f0"/><rect x="969" y="398.7" width="32" height="6" fill="#98a0f0"/><rect x="1001" y="398.7" width="40" height="6" fill="#dcc8f8"/><rect x="649" y="404.7" width="24" height="6" fill="#58c8f0"/><rect x="673" y="404.7" width="48" height="6" fill="#baa3f2"/><rect x="721" y="404.7" width="8" height="6" fill="#70e084"/><rect x="729" y="404.7" width="8" height="6" fill="#74e470"/><rect x="737" y="404.7" width="8" height="6" fill="#78e860"/><rect x="745" y="404.7" width="160" height="6" fill="#f8e038"/><rect x="905" y="404.7" width="8" height="6" fill="#78e860"/><rect x="913" y="404.7" width="56" height="6" fill="#71b8f0"/><rect x="969" y="404.7" width="32" height="6" fill="#98a0f0"/><rect x="1001" y="404.7" width="40" height="6" fill="#dcc8f8"/><rect x="649" y="410.7" width="32" height="6" fill="#58c8f0"/><rect x="681" y="410.7" width="8" height="6" fill="#5acae4"/><rect x="689" y="410.7" width="8" height="6" fill="#5eced0"/><rect x="697" y="410.7" width="8" height="6" fill="#63d3bd"/><rect x="705" y="410.7" width="8" height="6" fill="#67d7aa"/><rect x="713" y="410.7" width="8" height="6" fill="#6bdb97"/><rect x="721" y="410.7" width="8" height="6" fill="#70e084"/><rect x="729" y="410.7" width="8" height="6" fill="#74e470"/><rect x="737" y="410.7" width="176" height="6" fill="#f8e038"/><rect x="913" y="410.7" width="56" height="6" fill="#71b8f0"/><rect x="969" y="410.7" width="32" height="6" fill="#98a0f0"/><rect x="1001" y="410.7" width="40" height="6" fill="#dcc8f8"/><rect x="649" y="416.7" width="32" height="6" fill="#58c8f0"/><rect x="681" y="416.7" width="8" height="6" fill="#5acae4"/><rect x="689" y="416.7" width="8" height="6" fill="#5eced0"/><rect x="697" y="416.7" width="8" height="6" fill="#63d3bd"/><rect x="705" y="416.7" width="8" height="6" fill="#67d7aa"/><rect x="713" y="416.7" width="8" height="6" fill="#6bdb97"/><rect x="721" y="416.7" width="8" height="6" fill="#70e084"/><rect x="729" y="416.7" width="184" height="6" fill="#f8e038"/><rect x="913" y="416.7" width="8" height="6" fill="#78e860"/><rect x="921" y="416.7" width="48" height="6" fill="#71b8f0"/><rect x="969" y="416.7" width="32" height="6" fill="#98a0f0"/><rect x="1001" y="416.7" width="16" height="6" fill="#dcc8f8"/><rect x="1017" y="416.7" width="24" height="6" fill="#78e860"/><rect x="649" y="422.7" width="32" height="6" fill="#58c8f0"/><rect x="681" y="422.7" width="8" height="6" fill="#5acae4"/><rect x="689" y="422.7" width="8" height="6" fill="#5eced0"/><rect x="697" y="422.7" width="8" height="6" fill="#63d3bd"/><rect x="705" y="422.7" width="8" height="6" fill="#67d7aa"/><rect x="713" y="422.7" width="208" height="6" fill="#f8e038"/><rect x="921" y="422.7" width="8" height="6" fill="#78e860"/><rect x="929" y="422.7" width="64" height="6" fill="#6bbcf0"/><rect x="993" y="422.7" width="48" height="6" fill="#78e860"/><rect x="649" y="428.7" width="32" height="6" fill="#58c8f0"/><rect x="681" y="428.7" width="8" height="6" fill="#5acae4"/><rect x="689" y="428.7" width="8" height="6" fill="#5eced0"/><rect x="697" y="428.7" width="128" height="6" fill="#f8e038"/><rect x="825" y="428.7" width="24" height="6" fill="#f05a30"/><rect x="849" y="428.7" width="80" height="6" fill="#f8e038"/><rect x="929" y="428.7" width="64" height="6" fill="#6bbcf0"/><rect x="993" y="428.7" width="48" height="6" fill="#78e860"/><rect x="649" y="434.7" width="112" height="6" fill="#f8e038"/><rect x="761" y="434.7" width="48" height="6" fill="#f89838"/><rect x="809" y="434.7" width="64" height="6" fill="#f05a30"/><rect x="873" y="434.7" width="16" height="6" fill="#f89838"/><rect x="889" y="434.7" width="48" height="6" fill="#f8e038"/><rect x="937" y="434.7" width="56" height="6" fill="#6bbcf0"/><rect x="993" y="434.7" width="48" height="6" fill="#78e860"/><rect x="649" y="440.7" width="72" height="6" fill="#f8e038"/><rect x="721" y="440.7" width="80" height="6" fill="#f89838"/><rect x="801" y="440.7" width="80" height="6" fill="#f05a30"/><rect x="881" y="440.7" width="32" height="6" fill="#f89838"/><rect x="913" y="440.7" width="128" height="6" fill="#f8e038"/><rect x="649" y="446.7" width="32" height="6" fill="#f8e038"/><rect x="681" y="446.7" width="120" height="6" fill="#f89838"/><rect x="801" y="446.7" width="80" height="6" fill="#f05a30"/><rect x="881" y="446.7" width="56" height="6" fill="#f89838"/><rect x="937" y="446.7" width="104" height="6" fill="#f8e038"/><rect x="649" y="452.7" width="144" height="6" fill="#f89838"/><rect x="793" y="452.7" width="96" height="6" fill="#f05a30"/><rect x="889" y="452.7" width="152" height="6" fill="#f89838"/><rect x="649" y="458.7" width="144" height="6" fill="#f89838"/><rect x="793" y="458.7" width="96" height="6" fill="#f05a30"/><rect x="889" y="458.7" width="152" height="6" fill="#f89838"/><rect x="649" y="464.7" width="144" height="6" fill="#f89838"/><rect x="793" y="464.7" width="96" height="6" fill="#f05a30"/><rect x="889" y="464.7" width="152" height="6" fill="#f89838"/><rect x="649" y="470.7" width="40" height="6" fill="#f8bc38"/><rect x="689" y="470.7" width="104" height="6" fill="#f89838"/><rect x="793" y="470.7" width="96" height="6" fill="#f05a30"/><rect x="889" y="470.7" width="152" height="6" fill="#f89838"/><rect x="649" y="476.7" width="40" height="6" fill="#f8bc38"/><rect x="689" y="476.7" width="104" height="6" fill="#f89838"/><rect x="793" y="476.7" width="96" height="6" fill="#f05a30"/><rect x="889" y="476.7" width="152" height="6" fill="#f89838"/><rect x="649" y="482.7" width="40" height="6" fill="#f8bc38"/><rect x="689" y="482.7" width="104" height="6" fill="#f89838"/><rect x="793" y="482.7" width="96" height="6" fill="#f05a30"/><rect x="889" y="482.7" width="152" height="6" fill="#f89838"/><rect x="649" y="488.7" width="40" height="6" fill="#f8bc38"/><rect x="689" y="488.7" width="112" height="6" fill="#f89838"/><rect x="801" y="488.7" width="88" height="6" fill="#f05a30"/><rect x="889" y="488.7" width="152" height="6" fill="#f89838"/><rect x="649" y="494.7" width="40" height="6" fill="#f8bc38"/><rect x="689" y="494.7" width="112" height="6" fill="#f89838"/><rect x="801" y="494.7" width="80" height="6" fill="#f05a30"/><rect x="881" y="494.7" width="160" height="6" fill="#f89838"/><rect x="649" y="500.7" width="40" height="6" fill="#f8bc38"/><rect x="689" y="500.7" width="120" height="6" fill="#f89838"/><rect x="809" y="500.7" width="72" height="6" fill="#f05a30"/><rect x="881" y="500.7" width="128" height="6" fill="#f89838"/><rect x="1009" y="500.7" width="32" height="6" fill="#f05a30"/><rect x="649" y="506.7" width="40" height="6" fill="#f8bc38"/><rect x="689" y="506.7" width="120" height="6" fill="#f89838"/><rect x="809" y="506.7" width="64" height="6" fill="#f05a30"/><rect x="873" y="506.7" width="136" height="6" fill="#f89838"/><rect x="1009" y="506.7" width="32" height="6" fill="#f05a30"/><rect x="649" y="512.7" width="40" height="6" fill="#f8bc38"/><rect x="689" y="512.7" width="136" height="6" fill="#f89838"/><rect x="825" y="512.7" width="40" height="6" fill="#f05a30"/><rect x="865" y="512.7" width="144" height="6" fill="#f89838"/><rect x="1009" y="512.7" width="32" height="6" fill="#f05a30"/><rect x="649" y="518.7" width="32" height="6" fill="#f8e038"/><rect x="681" y="518.7" width="8" height="6" fill="#f8bc38"/><rect x="689" y="518.7" width="320" height="6" fill="#f89838"/><rect x="1009" y="518.7" width="32" height="6" fill="#f05a30"/><rect x="649" y="524.7" width="112" height="6" fill="#f8e038"/><rect x="761" y="524.7" width="240" height="6" fill="#f89838"/><rect x="1001" y="524.7" width="40" height="6" fill="#f8e038"/><rect x="649" y="530.7" width="392" height="6" fill="#f8e038"/><rect x="649" y="536.7" width="392" height="6" fill="#f8e038"/><rect x="649" y="542.7" width="392" height="6" fill="#f8e038"/><rect x="649" y="548.7" width="88" height="6" fill="#78e860"/><rect x="737" y="548.7" width="304" height="6" fill="#f8e038"/><rect x="649" y="554.7" width="392" height="6" fill="#78e860"/><rect x="649" y="560.7" width="392" height="6" fill="#78e860"/><rect x="649" y="566.7" width="392" height="6" fill="#78e860"/><rect x="649" y="572.7" width="392" height="6" fill="#78e860"/><rect x="649" y="578.7" width="392" height="6" fill="#78e860"/><rect x="649" y="584.7" width="64" height="6" fill="#b3abf7"/><rect x="713" y="584.7" width="224" height="6" fill="#78e860"/><rect x="937" y="584.7" width="104" height="6" fill="#b3abf7"/><rect x="649" y="590.7" width="392" height="6" fill="#beb7f8"/><rect x="649" y="596.7" width="392" height="6" fill="#cac4f8"/><rect x="649" y="602.7" width="392" height="6" fill="#d5d0f9"/><rect x="649" y="608.7" width="392" height="6" fill="#e0dcf9"/><rect x="649" y="614.7" width="392" height="6" fill="#ebe9f9"/><rect x="649" y="620.7" width="392" height="6" fill="#f0eefa"/></g><filter id="tex" x="649" y="338" width="389" height="283" filterUnits="userSpaceOnUse"><feTurbulence type="fractalNoise" baseFrequency="0.3" numOctaves="1" seed="11" result="n"/><feColorMatrix in="n" type="matrix" values="0 0 0 0 0.02  0 0 0 0 0.05  0 0 0 0 0.14  9 0 0 0 -4.75"/></filter><g mask="url(#dmask)"><rect x="649" y="338" width="389" height="283" fill="url(#d1)" opacity="0.12"/><rect x="649" y="338" width="389" height="283" filter="url(#tex)" fill="#000"/></g><rect x="649" y="338.7" width="389" height="12" fill="#041030" opacity="0.75"/></svg></div>
<div class="a" style="left:649px;top:338.7px;width:389px;height:281.8px;border-radius:8px;overflow:hidden">
<div class="t" style="left:76.60000000000002px;top:53.25px;font-size:14.5px;font-weight:normal;color:#1c1c1c;text-shadow:0 0 1.5px #fff,0 0 1px #fff;opacity:0.7">Halifax</div>
<div class="t" style="left:-7px;top:66.95px;font-size:14.5px;font-weight:normal;color:#1c1c1c;text-shadow:0 0 1.5px #fff,0 0 1px #fff;opacity:0.7">Cupertino</div>
<div class="t" style="left:228.39999999999998px;top:14.09px;font-size:14px;font-weight:normal;color:#1c1c1c;text-shadow:0 0 1.5px #fff,0 0 1px #fff;opacity:0.7">Murmansk</div>
<div class="t" style="left:197px;top:48.76px;font-size:15.5px;font-weight:normal;color:#1c1c1c;text-shadow:0 0 1.5px #fff,0 0 1px #fff;opacity:0.7">Ingolstadt</div>
<div class="t" style="left:298.29999999999995px;top:55.90px;font-size:15px;font-weight:normal;color:#1c1c1c;text-shadow:0 0 1.5px #fff,0 0 1px #fff;opacity:0.7">Almaty</div>
<div class="t" style="left:23.5px;top:92.03px;font-size:13.5px;font-weight:normal;color:#f4f4f4;text-shadow:0 0 1.5px rgba(0,0,0,0.7);opacity:0.55">Mexico</div>
<div class="t" style="left:225.5px;top:74.60px;font-size:14.8px;font-weight:normal;color:#f4f4f4;text-shadow:0 0 1.5px rgba(0,0,0,0.7);opacity:0.55">Cairo</div>
<div class="t" style="left:292.4px;top:92.96px;font-size:15.5px;font-weight:normal;color:#f4f4f4;text-shadow:0 0 1.5px rgba(0,0,0,0.7);opacity:0.55">Mumbai</div>
<div class="t" style="left:118px;top:143.29px;font-size:14px;font-weight:normal;color:#f4f4f4;text-shadow:0 0 1.5px rgba(0,0,0,0.7);opacity:0.55">Salvador</div>
<div class="t" style="left:367px;top:76.50px;font-size:15px;font-weight:normal;color:#f4f4f4;text-shadow:0 0 1.5px rgba(0,0,0,0.7);opacity:0.55">Stans</div>
<div class="t" style="left:-1px;top:31.79px;font-size:14px;font-weight:normal;color:#1c1c1c;text-shadow:0 0 1.5px #fff,0 0 1px #fff;opacity:0.7">go</div>
</div>
<svg style="left:653.4px;top:342.0px" width="20.4" height="20.4" viewBox="653.4 342.0 20.4 20.4"><path fill="#f8f8f8" fill-rule="evenodd" d="M661.79 345.65 L662.12 343.12 L665.08 343.12 L665.41 345.65 L666.95 346.28 L668.97 344.73 L671.07 346.83 L669.52 348.85 L670.15 350.39 L672.68 350.72 L672.68 353.68 L670.15 354.01 L669.52 355.55 L671.07 357.57 L668.97 359.67 L666.95 358.12 L665.41 358.75 L665.08 361.28 L662.12 361.28 L661.79 358.75 L660.25 358.12 L658.23 359.67 L656.13 357.57 L657.68 355.55 L657.05 354.01 L654.52 353.68 L654.52 350.72 L657.05 350.39 L657.68 348.85 L656.13 346.83 L658.23 344.73 L660.25 346.28Z M666.6 352.2 A3.0 3.0 0 1 0 660.6 352.2 A3.0 3.0 0 1 0 666.6 352.2Z"/><circle cx="663.6" cy="352.2" r="3.0" fill="#7048e0"/></svg>
<svg style="left:1014px;top:340px" width="22" height="22" viewBox="1014 340 22 22">
<g fill="#f4f4f4"><path d="M1026 342.5 H1033.5 V350 L1031 347.5 L1027.5 351 L1025.5 349 L1029 345.5 Z"/>
<path d="M1023.5 358.5 H1016 V351 L1018.5 353.5 L1022 350 L1024 352 L1020.5 355.5 Z"/></g></svg>
<div class="a" style="left:1015.2px;top:576.6px;width:17.200000000000045px;height:3.0px;background:#f6f6f6"></div>
<div class="a" style="left:1022.3px;top:569.5px;width:3.0px;height:17.200000000000045px;background:#f6f6f6"></div>
<div class="a" style="left:1015.2px;top:605.7px;width:17.200000000000045px;height:2.7999999999999545px;background:#d8d8e0"></div>
<svg style="left:653px;top:596px" width="18" height="22" viewBox="653 596 18 22"><path d="M658.5 598.5 L668 607 L658.5 615.5 Z" fill="#f0f0f0" stroke="#c0c0c8" stroke-width="0.8"/></svg>
<div class="t" style="left:843.3px;top:545.12px;font-size:12.5px;font-weight:bold;color:#fafafa;transform:translateX(-50%);opacity:0.9;text-shadow:0 0 1px rgba(0,0,0,0.6)">Radar courtesy Bureau of Meteorology</div>
<div class="t" style="left:843.3px;top:560.82px;font-size:12.5px;font-weight:bold;color:#fafafa;transform:translateX(-50%);opacity:0.9;text-shadow:0 0 1px rgba(0,0,0,0.6)">www.bom.gov.au</div>
<div class="t" style="left:843.3px;top:576.62px;font-size:12.5px;font-weight:bold;color:#fafafa;transform:translateX(-50%);opacity:0.9;text-shadow:0 0 1px rgba(0,0,0,0.6)">Radar courtesy Environment Canada</div>
<div class="t" style="left:843.3px;top:592.02px;font-size:12.5px;font-weight:bold;color:#fafafa;transform:translateX(-50%);opacity:0.55;text-shadow:0 0 1px rgba(0,0,0,0.6)">www.weatheroffice.gc.ca</div>
</body></html>
